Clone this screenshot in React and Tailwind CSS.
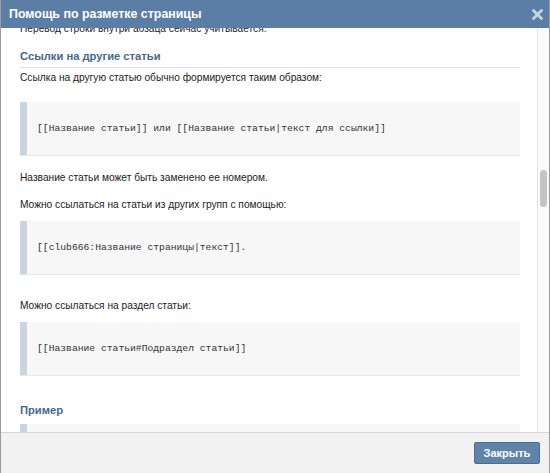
import React from "react";

const sans = { fontFamily: '"Liberation Sans", Arial, sans-serif' };

function Code({ children }) {
  return (
    <div className="flex h-[54px] bg-[#f7f7f8] border-b border-[#e6e8ea]">
      <div className="w-[7px] bg-[#c9d5de]" />
      <div
        className="flex items-center pl-[10px] text-[9.7px] text-[#333]"
        style={{ fontFamily: '"Liberation Mono", "Courier New", monospace' }}
      >
        {children}
      </div>
    </div>
  );
}

export default function App() {
  return (
    <div
      className="w-[550px] h-[473px] flex flex-col overflow-hidden bg-white border-x border-[#9c9c9c]"
      style={sans}
    >
      <div className="h-[28px] shrink-0 bg-[#5a7ea6] flex items-center justify-between pl-[8px] pr-[6px]">
        <span className="text-white font-bold text-[12.4px]">Помощь по разметке страницы</span>
        <svg width="11" height="11" viewBox="0 0 11 11" className="mt-[1px]">
          <path d="M1.5 1.5 L9.5 9.5 M9.5 1.5 L1.5 9.5" stroke="#c8d5e3" strokeWidth="2.8" strokeLinecap="round" />
        </svg>
      </div>
      <div className="flex-1 flex min-h-0">
        <div className="flex-1 overflow-hidden pl-[19px] pr-[17px]">
          <div className="-mt-[6px] text-[10.2px] text-[#222] leading-[14px]">
            <div className="h-[14px]">Перевод строки внутри абзаца сейчас учитывается.</div>
            <div className="mt-[13px] pb-[4px] border-b border-[#e4e4e4] text-[11.2px] font-bold text-[#45688e]">
              Ссылки на другие статьи
            </div>
            <div className="mt-[3px]">Ссылка на другую статью обычно формируется таким образом:</div>
            <div className="mt-[17px]">
              <Code>[[Название статьи]] или [[Название статьи|текст для ссылки]]</Code>
            </div>
            <div className="mt-[15px]">Название статьи может быть заменено ее номером.</div>
            <div className="mt-[13px]">Можно ссылаться на статьи из других групп с помощью:</div>
            <div className="mt-[9px]">
              <Code>[[club666:Название страницы|текст]].</Code>
            </div>
            <div className="mt-[24px]">Можно ссылаться на раздел статьи:</div>
            <div className="mt-[9px]">
              <Code>[[Название статьи#Подраздел статьи]]</Code>
            </div>
            <div className="mt-[27px] text-[11.2px] font-bold text-[#45688e]">Пример</div>
            <div className="mt-[7px]">
              <Code>{" "}</Code>
            </div>
          </div>
        </div>
        <div className="w-[12px] shrink-0 border-l border-[#e4e4e4] bg-[#fafafa] relative">
          <div className="absolute left-[2px] top-[142px] w-[7px] h-[37px] rounded-[4px] bg-[#c4c4c4]" />
        </div>
      </div>
      <div className="h-[41px] shrink-0 bg-[#f2f2f2] border-t border-[#d6d6d6] flex items-center justify-end pr-[9px]">
        <button className="w-[66px] h-[22px] bg-[#6083aa] border border-[#4c6d93] rounded-[2px] text-white text-[11px] font-bold">
          Закрыть
        </button>
      </div>
    </div>
  );
}
